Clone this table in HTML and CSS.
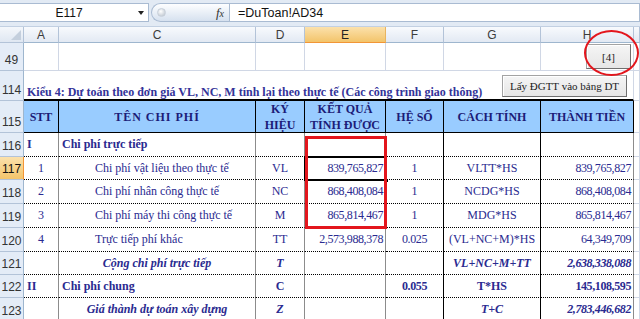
FILE: index.html
```html
<!DOCTYPE html>
<html lang="vi">
<head>
    <meta charset="UTF-8">
    <title>DuToan - E117</title>
    <link rel="stylesheet" href="styles.css">
</head>
<body>
    <div class="formula-bar">
        <div class="name-box">
            <span class="name">E117</span>
            <span class="caret"></span>
        </div>
        <div class="fx-area">
            <div class="pill">
                <span class="grip"></span>
                <span class="fx">f<small>x</small></span>
            </div>
        </div>
        <div class="formula">=DuToan!AD34</div>
    </div>

    <div class="sheet">
        <!-- column headers -->
        <div class="corner"></div>
        <div class="col-head">A</div>
        <div class="col-head">C</div>
        <div class="col-head">D</div>
        <div class="col-head sel">E</div>
        <div class="col-head">F</div>
        <div class="col-head">G</div>
        <div class="col-head">H</div>
        <div class="col-head"></div>

        <!-- row 49 -->
        <div class="row-head">49</div>
        <div class="cell"></div>
        <div class="cell"></div>
        <div class="cell"></div>
        <div class="cell"></div>
        <div class="cell"></div>
        <div class="cell"></div>
        <div class="cell"></div>
        <div class="cell"></div>

        <!-- row 114 -->
        <div class="row-head">114</div>
        <div class="cell title">Kiểu 4: Dự toán theo đơn giá VL, NC, M tính lại theo thực tế (Các công trình giao thông)</div>
        <div class="cell"></div>

        <!-- row 115 -->
        <div class="row-head">115</div>
        <div class="th">STT</div>
        <div class="th wide">TÊN CHI PHÍ</div>
        <div class="th">KÝ<br>HIỆU</div>
        <div class="th">KẾT QUẢ<br>TÍNH ĐƯỢC</div>
        <div class="th">HỆ SỐ</div>
        <div class="th">CÁCH TÍNH</div>
        <div class="th">THÀNH TIỀN</div>
        <div class="cell"></div>

        <!-- row 116 -->
        <div class="row-head">116</div>
        <div class="td l b">I</div>
        <div class="td l b">Chi phí trực tiếp</div>
        <div class="td"></div>
        <div class="td"></div>
        <div class="td bk"></div>
        <div class="td bk"></div>
        <div class="td"></div>
        <div class="cell"></div>

        <!-- row 117 -->
        <div class="row-head sel">117</div>
        <div class="td c">1</div>
        <div class="td ind">Chi phí vật liệu theo thực tế</div>
        <div class="td c">VL</div>
        <div class="td r num">839,765,827</div>
        <div class="td c bk">1</div>
        <div class="td c bk">VLTT*HS</div>
        <div class="td r num">839,765,827</div>
        <div class="cell"></div>

        <!-- row 118 -->
        <div class="row-head">118</div>
        <div class="td c">2</div>
        <div class="td ind">Chi phí nhân công thực tế</div>
        <div class="td c">NC</div>
        <div class="td r num">868,408,084</div>
        <div class="td c bk">1</div>
        <div class="td c bk">NCDG*HS</div>
        <div class="td r num">868,408,084</div>
        <div class="cell"></div>

        <!-- row 119 -->
        <div class="row-head">119</div>
        <div class="td c">3</div>
        <div class="td ind">Chi phí máy thi công thực tế</div>
        <div class="td c">M</div>
        <div class="td r num">865,814,467</div>
        <div class="td c bk">1</div>
        <div class="td c bk">MDG*HS</div>
        <div class="td r num">865,814,467</div>
        <div class="cell"></div>

        <!-- row 120 -->
        <div class="row-head">120</div>
        <div class="td c">4</div>
        <div class="td ind">Trực tiếp phí khác</div>
        <div class="td c">TT</div>
        <div class="td r num">2,573,988,378</div>
        <div class="td c bk num">0.025</div>
        <div class="td c bk">(VL+NC+M)*HS</div>
        <div class="td r num">64,349,709</div>
        <div class="cell"></div>

        <!-- row 121 -->
        <div class="row-head">121</div>
        <div class="td"></div>
        <div class="td c b i">Cộng chi phí trực tiếp</div>
        <div class="td c b i">T</div>
        <div class="td"></div>
        <div class="td bk"></div>
        <div class="td c b i bk">VL+NC+M+TT</div>
        <div class="td r b i num">2,638,338,088</div>
        <div class="cell"></div>

        <!-- row 122 -->
        <div class="row-head">122</div>
        <div class="td l b">II</div>
        <div class="td l b">Chi phí chung</div>
        <div class="td c b">C</div>
        <div class="td"></div>
        <div class="td c b bk num">0.055</div>
        <div class="td c b bk">T*HS</div>
        <div class="td r b num">145,108,595</div>
        <div class="cell"></div>

        <!-- row 123 -->
        <div class="row-head">123</div>
        <div class="td"></div>
        <div class="td c b i">Giá thành dự toán xây dựng</div>
        <div class="td c b i">Z</div>
        <div class="td"></div>
        <div class="td bk"></div>
        <div class="td c b i bk">T+C</div>
        <div class="td r b i num">2,783,446,682</div>
        <div class="cell"></div>

        <!-- things floating over the grid -->
        <div class="active-cell"><span class="fill-handle"></span></div>
        <div class="red-box"></div>
        <button class="sheet-btn btn-four">[4]</button>
        <button class="sheet-btn btn-copy">Lấy ĐGTT vào bảng DT</button>
        <div class="red-ring"></div>
    </div>
</body>
</html>
```

FILE: styles.css
```css
:root {
    --grid-line: #d0d7e5;
    --head-line: #b3c3d8;
    --head-bg: #e4ecf7;
    --ink: #2a2a90;
    --table-blue: #99ccff;
    --red: #e3161d;
}

* {
    margin: 0;
    padding: 0;
    box-sizing: border-box;
}

body {
    width: 640px;
    height: 319px;
    overflow: hidden;
    background: white;
    font-family: "Liberation Sans", Arial, sans-serif;
}

/* formula bar */

.formula-bar {
    display: flex;
    height: 27px;
    padding: 3px 0 4px;
    background: #e2eaf4;
    border-bottom: 1px solid #c2d0e2;
}

.name-box {
    width: 149px;
    display: flex;
    align-items: center;
    background: white;
    border: 1px solid #a9bbd2;
    border-left: none;
}

.name-box .name {
    flex: 1;
    text-align: center;
    font-size: 12px;
    color: #111;
}

.caret {
    width: 0;
    height: 0;
    border-left: 3.5px solid transparent;
    border-right: 3.5px solid transparent;
    border-top: 4px solid #222;
    margin-right: 4px;
}

.fx-area {
    width: 80px;
    display: flex;
    padding-left: 2px;
}

.pill {
    flex: 1;
    display: flex;
    align-items: center;
    justify-content: space-between;
    padding: 0 5px 0 5px;
    border: 1px solid #a9bbd2;
    border-right: none;
    border-radius: 10px 0 0 10px;
    background: linear-gradient(#fdfeff, #d6e1ef);
}

.grip {
    width: 9px;
    height: 9px;
    border-radius: 50%;
    background: radial-gradient(circle at 40% 35%, #ffffff, #b4bec9);
    border: 1px solid #c8d0da;
}

.fx {
    font-family: "Liberation Serif", serif;
    font-style: italic;
    font-size: 13px;
    color: #333;
}

.fx small {
    font-size: 10px;
}

.formula {
    flex: 1;
    display: flex;
    align-items: center;
    padding-left: 8px;
    background: white;
    border: 1px solid #a9bbd2;
    font-size: 12.5px;
    color: #111;
}

/* sheet grid */

.sheet {
    position: relative;
    display: grid;
    grid-template-columns: 24px 35px 197px 49px 81px 58px 97px 93px 1fr;
    grid-template-rows: 16px 28px 30px 32px 24px 23px 24px 24px 24px 23px 23px 24px;
    height: 292px;
    overflow: hidden;
}

.corner {
    position: relative;
    background: linear-gradient(#f4f7fb, #dfe7f2);
    border-right: 1px solid var(--head-line);
    border-bottom: 1px solid var(--head-line);
}

.corner::after {
    content: "";
    position: absolute;
    right: 2px;
    bottom: 2px;
    border-left: 10px solid transparent;
    border-bottom: 10px solid #c4cfdd;
}

.col-head {
    display: flex;
    align-items: center;
    justify-content: center;
    background: linear-gradient(#f8fafd, #e2e9f3);
    border-right: 1px solid var(--head-line);
    border-bottom: 1px solid #9eb6ce;
    font-size: 12px;
    color: #3c3c3c;
}

.col-head.sel {
    background: linear-gradient(#fbe1ac, #f3c46a);
    border-bottom: 1px solid #f29536;
    border-right-color: #e8b45f;
    color: #222;
}

.row-head {
    display: flex;
    align-items: flex-end;
    justify-content: center;
    padding-bottom: 3px;
    background: var(--head-bg);
    border-right: 1px solid #9eb6ce;
    border-bottom: 1px solid var(--head-line);
    font-size: 12px;
    color: #333;
}

.row-head.sel {
    background: linear-gradient(#fbe1ac, #f3c46a);
    border-right-color: #f29536;
    color: #111;
}

.cell {
    border-right: 1px solid var(--grid-line);
    border-bottom: 1px solid var(--grid-line);
}

.title {
    grid-column: span 7;
    display: flex;
    align-items: flex-end;
    padding-left: 3px;
    border-bottom: 2px solid black;
    font-family: "Liberation Serif", serif;
    font-weight: bold;
    font-size: 12px;
    line-height: 14px;
    color: #333399;
    white-space: nowrap;
}

.th {
    display: flex;
    align-items: center;
    justify-content: center;
    text-align: center;
    background: var(--table-blue);
    border-right: 1px solid black;
    border-bottom: 1px solid black;
    font-family: "Liberation Serif", serif;
    font-weight: bold;
    font-size: 12px;
    line-height: 16px;
    color: #1c1c78;
}

.th.wide {
    letter-spacing: 1px;
}

.td {
    display: flex;
    align-items: center;
    border-right: 1px solid #8c8c8c;
    border-bottom: 1px dotted black;
    font-family: "Liberation Serif", serif;
    font-size: 12px;
    color: var(--ink);
    white-space: nowrap;
}

.td.bk {
    border-right-color: black;
}

.td.c {
    justify-content: center;
}

.td.r {
    justify-content: flex-end;
    padding-right: 2px;
}

.td.l {
    padding-left: 3px;
}

.td.ind {
    padding-left: 36px;
}

.td.b {
    font-weight: bold;
}

.td.i {
    font-style: italic;
}

.num {
    letter-spacing: -0.4px;
}

/* overlays */

.active-cell {
    position: absolute;
    left: 304px;
    top: 129px;
    width: 83px;
    height: 25px;
    border: 2px solid black;
}

.fill-handle {
    position: absolute;
    right: -4px;
    bottom: -4px;
    width: 5px;
    height: 5px;
    background: black;
    border: 1px solid white;
}

.red-box {
    position: absolute;
    left: 305px;
    top: 109px;
    width: 82px;
    height: 93px;
    border: 3px solid var(--red);
}

.sheet-btn {
    position: absolute;
    background: linear-gradient(#f5f5f5, #e6e6e6);
    border: 1px solid #a3a3a3;
    border-right-color: #6f6f6f;
    border-bottom-color: #6f6f6f;
    box-shadow: inset 1px 1px 0 white;
    font-family: "Liberation Serif", serif;
    font-size: 11px;
    color: #222;
}

.btn-four {
    left: 586px;
    top: 17px;
    width: 45px;
    height: 25px;
}

.btn-copy {
    left: 502px;
    top: 48px;
    width: 125px;
    height: 22px;
}

.red-ring {
    position: absolute;
    left: 584px;
    top: 3px;
    width: 55px;
    height: 46px;
    border: 2.5px solid var(--red);
    border-radius: 50%;
}
```
